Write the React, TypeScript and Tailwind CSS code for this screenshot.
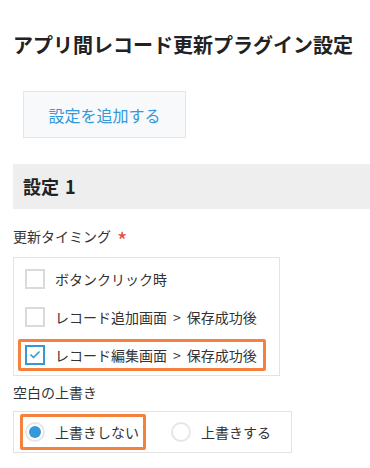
import { Check } from "lucide-react"

const timings = [
  { label: ["ボタンクリック時"], checked: false },
  { label: ["レコード追加画面", "保存成功後"], checked: false },
  { label: ["レコード編集画面", "保存成功後"], checked: true },
]

function CheckRow({ label, checked }: { label: string[]; checked: boolean }) {
  return (
    <div className="h-[38px] flex items-center">
      <div
        className={`mx-[4px] h-[32px] w-[248px] flex items-center gap-[10px] px-[4px] border-[3px] rounded-[2px] ${
          checked ? "border-[#f5813d]" : "border-transparent"
        }`}
      >
        <span
          className={`w-[20px] h-[20px] shrink-0 flex items-center justify-center border-2 ${
            checked ? "border-[#3498db]" : "border-[#dadada]"
          }`}
        >
          {checked && <Check className="w-[12px] h-[12px] text-[#3498db]" strokeWidth={3.5} />}
        </span>
        <span className="text-[14px] leading-[20px] text-[#333] whitespace-nowrap">
          {label[0]}
          {label[1] && (
            <>
              <span className="mx-[6px]">&gt;</span>
              {label[1]}
            </>
          )}
        </span>
      </div>
    </div>
  )
}

function RadioItem({ label, selected, className }: { label: string; selected: boolean; className: string }) {
  return (
    <div
      className={`h-[36px] flex items-center gap-[10px] pl-[2px] pr-[4px] border-[3px] rounded-[2px] ${
        selected ? "border-[#f5813d]" : "border-transparent"
      } ${className}`}
    >
      <span className="w-[20px] h-[20px] shrink-0 rounded-full border-2 border-[#e6e6e6] flex items-center justify-center">
        {selected && <span className="w-[12px] h-[12px] rounded-full bg-[#3498db]" />}
      </span>
      <span className="text-[14px] leading-[20px] text-[#333] whitespace-nowrap">{label}</span>
    </div>
  )
}

export default function App() {
  return (
    <div
      className="w-[370px] h-[468px] overflow-hidden bg-white text-[#333] pl-[13px]"
      style={{ fontFamily: '"Noto Sans CJK JP", "Noto Sans", sans-serif' }}
    >
      <h1 className="pt-[31px] text-[20px] leading-[28px] font-bold text-[#222] whitespace-nowrap">
        アプリ間レコード更新プラグイン設定
      </h1>

      <button className="mt-[32px] ml-[10px] w-[163px] h-[47px] bg-[#f7f9fa] border border-[#e3e7e8] text-[#3498db] text-[16px]">
        設定を追加する
      </button>

      <div className="mt-[26px] h-[45px] bg-[#eeeeee] flex items-center pl-[10px]">
        <h2 className="text-[18px] font-bold text-[#222]">
          設定<span className="ml-[6px]">1</span>
        </h2>
      </div>

      <div className="mt-[17px] h-[20px] flex items-center text-[14px] leading-[20px]">
        更新タイミング
        <span className="ml-[6px] text-[#e74c3c] text-[22px] leading-none mt-[6px]">*</span>
      </div>

      <div className="mt-[11px] w-[267px] border border-[#e3e3e3] pt-[2px] pb-[1px]">
        {timings.map((t) => (
          <CheckRow key={t.label.join()} label={t.label} checked={t.checked} />
        ))}
      </div>

      <div className="mt-[6px] text-[14px] leading-[20px]">空白の上書き</div>

      <div className="mt-[9px] w-[279px] h-[42px] border border-[#e3e3e3] flex items-center">
        <RadioItem label="上書きしない" selected className="ml-[6px]" />
        <RadioItem label="上書きする" selected={false} className="ml-[20px]" />
      </div>
    </div>
  )
}
